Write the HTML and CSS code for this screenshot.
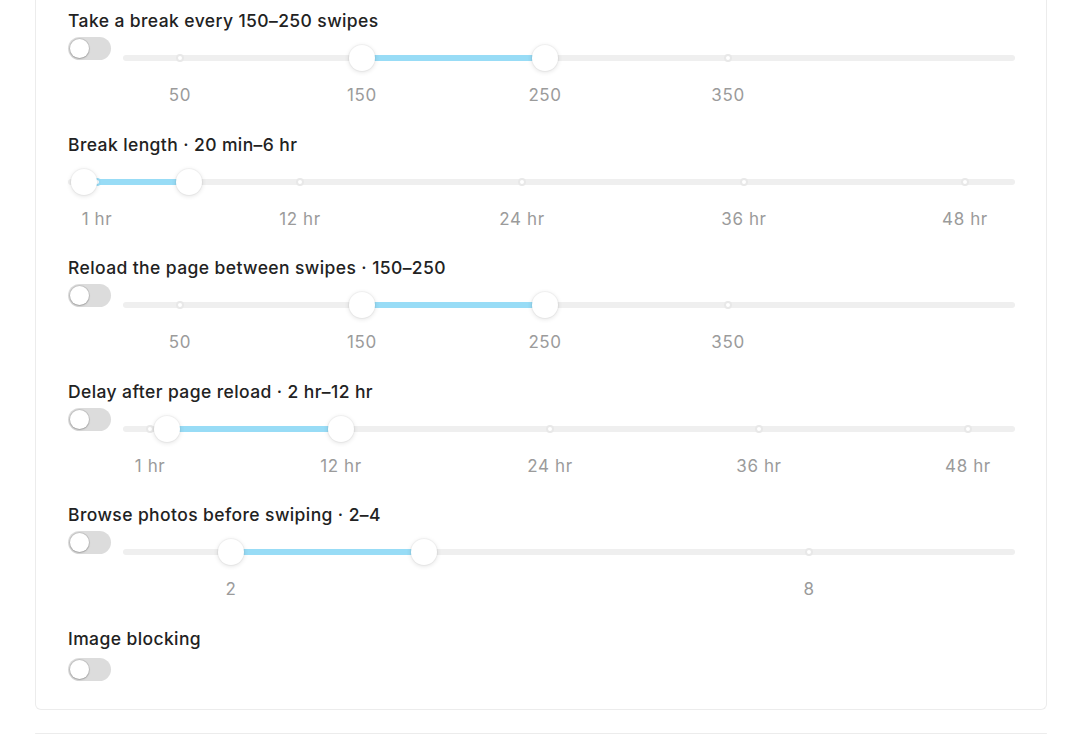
FILE: index.html
```html
<!DOCTYPE html>
<html lang="en">
<head>
<meta charset="utf-8">
<title>Settings</title>
<link rel="stylesheet" href="styles.css">
</head>
<body>
<div class="page">
  <section class="card">
    <div class="row">
      <div class="title">Take a break every 150–250 swipes</div>
      <div class="controls">
        <span class="switch"><span class="knob"></span></span>
        <div class="slider">
          <div class="rail-area">
            <div class="rail"></div>
            <div class="track" style="left:26.79%;width:20.52%"></div>
            <span class="dot" style="left:6.39%"></span>
            <span class="dot on" style="left:26.79%"></span>
            <span class="dot on" style="left:47.31%"></span>
            <span class="dot" style="left:67.83%"></span>
            <span class="handle" style="left:26.79%"></span>
            <span class="handle" style="left:47.31%"></span>
          </div>
          <div class="marks">
            <span style="left:6.39%">50</span>
            <span style="left:26.79%">150</span>
            <span style="left:47.31%">250</span>
            <span style="left:67.83%">350</span>
          </div>
        </div>
      </div>
    </div>

    <div class="row">
      <div class="title">Break length · 20 min–6 hr</div>
      <div class="controls">
        <div class="slider">
          <div class="rail-area">
            <div class="rail"></div>
            <div class="track" style="left:1.69%;width:11.09%"></div>
            <span class="dot on" style="left:3.06%"></span>
            <span class="dot" style="left:24.50%"></span>
            <span class="dot" style="left:47.94%"></span>
            <span class="dot" style="left:71.38%"></span>
            <span class="dot" style="left:94.72%"></span>
            <span class="handle" style="left:1.69%"></span>
            <span class="handle" style="left:12.78%"></span>
          </div>
          <div class="marks">
            <span style="left:3.06%">1 hr</span>
            <span style="left:24.50%">12 hr</span>
            <span style="left:47.94%">24 hr</span>
            <span style="left:71.38%">36 hr</span>
            <span style="left:94.72%">48 hr</span>
          </div>
        </div>
      </div>
    </div>

    <div class="row">
      <div class="title">Reload the page between swipes · 150–250</div>
      <div class="controls">
        <span class="switch"><span class="knob"></span></span>
        <div class="slider">
          <div class="rail-area">
            <div class="rail"></div>
            <div class="track" style="left:26.79%;width:20.52%"></div>
            <span class="dot" style="left:6.39%"></span>
            <span class="dot on" style="left:26.79%"></span>
            <span class="dot on" style="left:47.31%"></span>
            <span class="dot" style="left:67.83%"></span>
            <span class="handle" style="left:26.79%"></span>
            <span class="handle" style="left:47.31%"></span>
          </div>
          <div class="marks">
            <span style="left:6.39%">50</span>
            <span style="left:26.79%">150</span>
            <span style="left:47.31%">250</span>
            <span style="left:67.83%">350</span>
          </div>
        </div>
      </div>
    </div>

    <div class="row">
      <div class="title">Delay after page reload · 2 hr–12 hr</div>
      <div class="controls">
        <span class="switch"><span class="knob"></span></span>
        <div class="slider">
          <div class="rail-area">
            <div class="rail"></div>
            <div class="track" style="left:4.97%;width:19.47%"></div>
            <span class="dot" style="left:3.03%"></span>
            <span class="dot on" style="left:24.44%"></span>
            <span class="dot" style="left:47.87%"></span>
            <span class="dot" style="left:71.30%"></span>
            <span class="dot" style="left:94.73%"></span>
            <span class="handle" style="left:4.97%"></span>
            <span class="handle" style="left:24.44%"></span>
          </div>
          <div class="marks">
            <span style="left:3.03%">1 hr</span>
            <span style="left:24.44%">12 hr</span>
            <span style="left:47.87%">24 hr</span>
            <span style="left:71.30%">36 hr</span>
            <span style="left:94.73%">48 hr</span>
          </div>
        </div>
      </div>
    </div>

    <div class="row">
      <div class="title">Browse photos before swiping · 2–4</div>
      <div class="controls">
        <span class="switch"><span class="knob"></span></span>
        <div class="slider">
          <div class="rail-area">
            <div class="rail"></div>
            <div class="track" style="left:12.11%;width:21.63%"></div>
            <span class="dot on" style="left:12.11%"></span>
            <span class="dot" style="left:76.91%"></span>
            <span class="handle" style="left:12.11%"></span>
            <span class="handle" style="left:33.74%"></span>
          </div>
          <div class="marks">
            <span style="left:12.11%">2</span>
            <span style="left:76.91%">8</span>
          </div>
        </div>
      </div>
    </div>

    <div class="row last">
      <div class="title">Image blocking</div>
      <span class="switch"><span class="knob"></span></span>
    </div>
  </section>

  <section class="card next"></section>
</div>
</body>
</html>
```

FILE: styles.css
```css
* { box-sizing: border-box; }

html, body {
  margin: 0;
  padding: 0;
  background: #ffffff;
}

body {
  font-family: Inter, "Liberation Sans", Arial, sans-serif;
  color: #1f1f1f;
  overflow: hidden;
}

.page {
  padding: 0 33px 0 35px;
}

.card {
  background: #fff;
  border: 1px solid #ececec;
  border-top: none;
  border-radius: 0 0 6px 6px;
  padding: 9px 31px 28px 32px;
}

.card.next {
  margin-top: 23px;
  border-top: 1px solid #ececec;
  border-bottom: none;
  border-radius: 6px 6px 0 0;
  height: 1px;
  padding: 0;
}

.row {
  margin-bottom: 27.5px;
}

.row.last {
  margin-bottom: 0;
  display: flex;
  flex-direction: column;
  align-items: flex-start;
}

.title {
  font-size: 17.5px;
  font-weight: 500;
  letter-spacing: 0.4px;
  line-height: 24px;
  height: 24px;
  color: #222;
  white-space: nowrap;
}

.controls {
  display: flex;
  align-items: flex-start;
  gap: 12px;
}

.switch {
  flex: none;
  position: relative;
  display: block;
  width: 43px;
  height: 23px;
  border-radius: 12px;
  background: #dcdcdc;
  margin-top: 4px;
}

.row.last .switch {
  margin-top: 7.5px;
}

.knob {
  position: absolute;
  left: 2px;
  top: 2px;
  width: 19px;
  height: 19px;
  border-radius: 50%;
  background: #fff;
  box-shadow: 0 0 0 1px rgba(0, 0, 0, 0.10), 0 1px 2px rgba(0, 0, 0, 0.18);
}

.slider {
  flex: 1;
  min-width: 0;
  padding-top: 12px;
}

.rail-area {
  position: relative;
  height: 26px;
}

.rail {
  position: absolute;
  left: 0;
  right: 0;
  top: 10px;
  height: 6px;
  border-radius: 3px;
  background: #efefef;
}

.track {
  position: absolute;
  top: 10px;
  height: 6px;
  background: #98dcf6;
}

.dot {
  position: absolute;
  top: 9px;
  width: 8px;
  height: 8px;
  margin-left: -4px;
  border-radius: 50%;
  background: #fff;
  border: 2px solid #e8e8e8;
}

.dot.on {
  border-color: #98dcf6;
}

.handle {
  position: absolute;
  top: 0;
  width: 26px;
  height: 26px;
  margin-left: -13px;
  border-radius: 50%;
  background: #fff;
  box-shadow: 0 0 0 1px rgba(0, 0, 0, 0.03), 0 1px 5px rgba(0, 0, 0, 0.13);
}

.marks {
  position: relative;
  height: 20px;
  margin-top: 14px;
}

.marks span {
  position: absolute;
  top: 0;
  transform: translateX(-50%);
  font-size: 17px;
  font-weight: 400;
  letter-spacing: 0.6px;
  line-height: 20px;
  color: #9b9b9b;
  white-space: nowrap;
}
```
